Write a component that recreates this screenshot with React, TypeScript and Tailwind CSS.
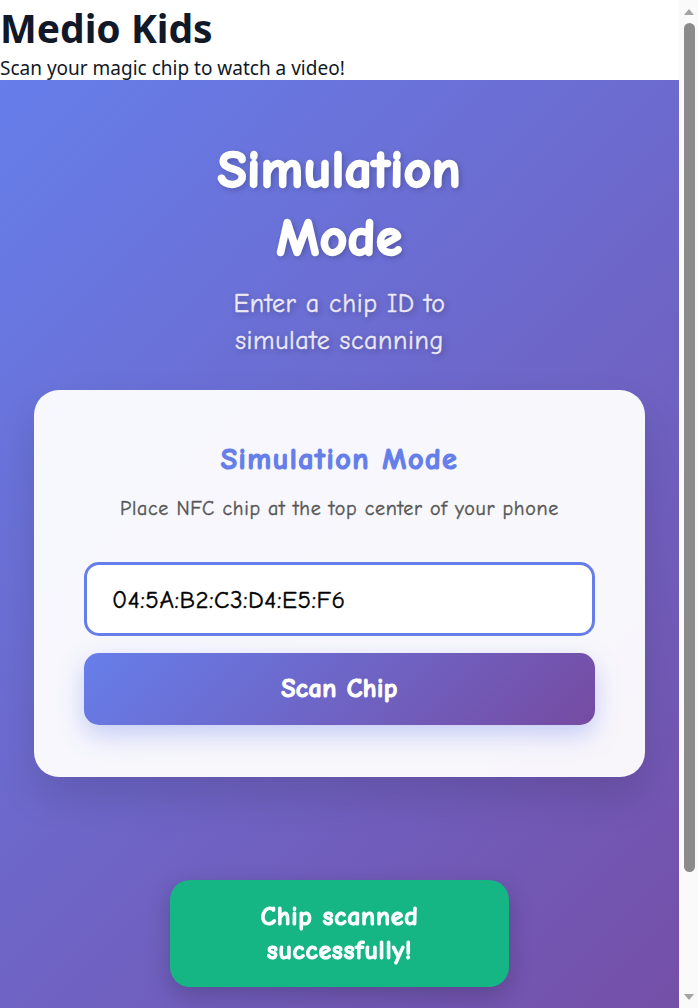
import React, { useState } from "react";

const comic = "font-['Comic_Neue',cursive]";

const ScrollBar = () => (
    <div className="fixed top-0 right-0 h-screen w-[19px] bg-[#fafafa] flex flex-col items-center">
        <svg width="10" height="6" viewBox="0 0 10 6" className="mt-[9px] ml-[1px]">
            <path d="M0 6 L5 0 L10 6 Z" fill="#a3a3a3" />
        </svg>
        <div className="mt-[8px] ml-[1px] w-[11px] h-[849px] rounded-full bg-[#8b8b8b]" />
        <div className="flex-1" />
        <svg width="10" height="6" viewBox="0 0 10 6" className="mb-[8px] ml-[1px]">
            <path d="M0 0 L10 0 L5 6 Z" fill="#a3a3a3" />
        </svg>
    </div>
);

const App = () => {
    const [chipId, setChipId] = useState("04:5A:B2:C3:D4:E5:F6");

    return (
        <div className="min-h-screen bg-white w-[679px]">
            <header className="font-['Noto_Sans',sans-serif] text-[#111827]">
                <h1 className="text-[39px] leading-[56px] font-bold">Medio Kids</h1>
                <p className="text-[19px] leading-[24px]">Scan your magic chip to watch a video!</p>
            </header>

            <main className={`${comic} min-h-[1075px] bg-[linear-gradient(135deg,#667eea_0%,#764ba2_100%)] flex flex-col items-center pt-[56px] px-5`}>
                <div className="text-center [text-shadow:2px_2px_6px_rgba(0,0,0,0.3)]">
                    <h2 className="mx-auto max-w-[320px] text-[53px] leading-[68px] tracking-[0.6px] font-bold text-white [-webkit-text-stroke:2.4px_white]">
                        Simulation Mode
                    </h2>
                    <p className="mx-auto mt-[14px] max-w-[260px] text-[26px] leading-[37px] tracking-[0.6px] text-[#ebe9f8] [-webkit-text-stroke:0.4px_#ebe9f8]">
                        Enter a chip ID to simulate scanning
                    </p>
                </div>

                <div className="mt-[30px] w-[611px] rounded-[25px] bg-white/95 px-[50px] pt-[50px] pb-[52px] shadow-[0_20px_40px_rgba(0,0,0,0.12)]">
                    <h3 className="text-center text-[30px] leading-[40px] tracking-[1.5px] font-bold text-[#667eea] [-webkit-text-stroke:1.2px_#667eea]">
                        Simulation Mode
                    </h3>
                    <p className="mt-[16px] text-center text-[20px] leading-[26px] tracking-[0.7px] text-[#555] [-webkit-text-stroke:0.4px_#555]">
                        Place NFC chip at the top center of your phone
                    </p>
                    <input
                        value={chipId}
                        onChange={(e) => setChipId(e.target.value)}
                        className="mt-[40px] block w-full h-[74px] rounded-[15px] border-[3px] border-[#667eea] bg-white px-[25px] text-[25px] tracking-[0.5px] text-black [-webkit-text-stroke:0.4px_black] outline-none"
                    />
                    <button className="mt-[17px] w-full h-[72px] rounded-[15px] bg-[linear-gradient(135deg,#667eea_0%,#764ba2_100%)] text-[26px] tracking-[0.5px] font-bold text-white [-webkit-text-stroke:1.1px_white] shadow-[0_10px_25px_rgba(102,126,234,0.35)]">
                        Scan Chip
                    </button>
                </div>
            </main>

            <div className={`${comic} fixed bottom-[21px] left-[170px] w-[339px] h-[107px] rounded-[20px] bg-[#15b584] flex items-center justify-center text-center text-[26px] leading-[34px] tracking-[0.7px] font-bold text-white [-webkit-text-stroke:1px_white] shadow-[0_8px_24px_rgba(0,0,0,0.2)]`}>
                <span className="max-w-[220px]">Chip scanned successfully!</span>
            </div>

            <ScrollBar />
        </div>
    );
};

export default App;
